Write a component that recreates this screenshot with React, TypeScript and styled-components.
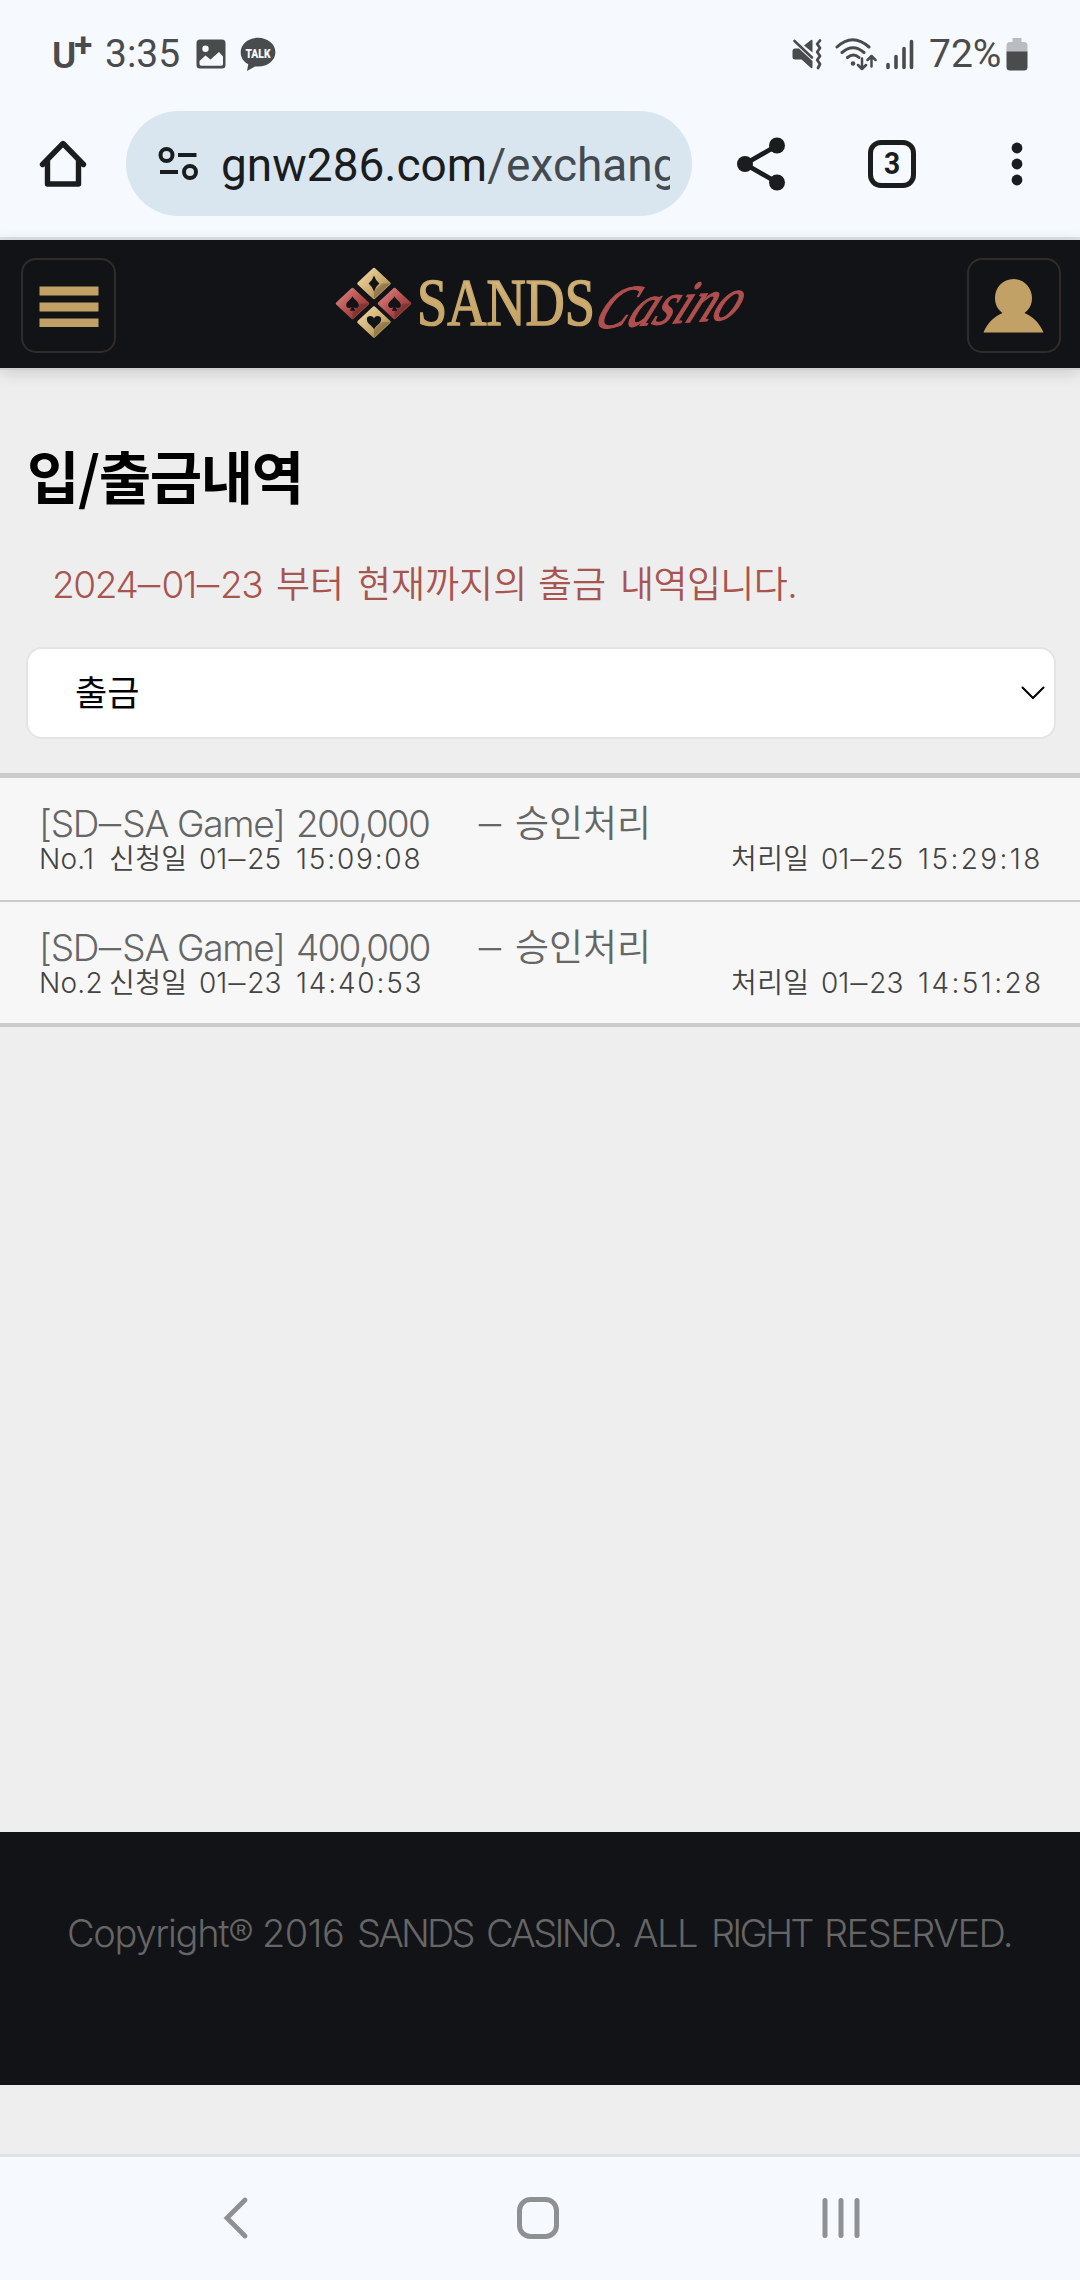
import React from "react";
import styled, { createGlobalStyle } from "styled-components";

const Global = createGlobalStyle`
  * { box-sizing: border-box; }
  html, body { margin: 0; padding: 0; background: #eeeeee; }
  svg { display: block; flex: none; }
`;

const SITE_FONT = `Inter, "Noto Sans CJK KR", sans-serif`;
const SYSTEM_FONT = `Roboto, "Noto Sans", sans-serif`;

const Screen = styled.div`
  width: 1080px;
  height: 2280px;
  overflow: hidden;
  display: flex;
  flex-direction: column;
  background: #eeeeee;
  font-family: ${SITE_FONT};
`;

/* ---------- device chrome ---------- */

const StatusBar = styled.header`
  height: 108px;
  flex: none;
  background: #f6f9fe;
  display: flex;
  justify-content: space-between;
  align-items: center;
  padding: 0 52px;
  font-family: ${SYSTEM_FONT};
  color: #4a4b4d;
`;

const StatusGroup = styled.div`
  display: flex;
  align-items: center;
`;

const Carrier = styled.span`
  width: 42px;
  display: flex;
  padding-top: 3px;
  font-size: 37px;
  line-height: 44px;
  font-weight: 600;
`;

const CarrierPlus = styled.span`
  font-size: 33px;
  line-height: 22px;
  font-weight: 700;
  margin-left: -2px;
`;

const StatusText = styled.span<{ $width: number; $left: number }>`
  width: ${(p) => p.$width}px;
  margin-left: ${(p) => p.$left}px;
  font-size: 39px;
  line-height: 44px;
  white-space: nowrap;
`;

const IconSlot = styled.span<{ $left: number }>`
  margin-left: ${(p) => p.$left}px;
  display: flex;
`;

const Toolbar = styled.nav`
  height: 132px;
  flex: none;
  background: #f6f9fe;
  border-bottom: 3px solid #dde2e7;
  display: flex;
  align-items: flex-start;
  padding: 3px 0 0 37px;
  font-family: ${SYSTEM_FONT};
`;

const ToolButton = styled.button<{ $left?: number }>`
  width: 52px;
  height: 105px;
  margin: 0 0 0 ${(p) => p.$left ?? 0}px;
  padding: 0;
  border: 0;
  background: none;
  display: flex;
  align-items: center;
  justify-content: center;
`;

const AddressBar = styled.div`
  width: 566px;
  height: 105px;
  margin-left: 37px;
  padding: 0 20px 0 31px;
  border-radius: 53px;
  background: #dae6ef;
  display: flex;
  align-items: center;
`;

const Url = styled.span`
  width: 449px;
  margin-left: 22px;
  padding-top: 2px;
  overflow: hidden;
  white-space: nowrap;
  font-size: 46px;
  line-height: 60px;
  color: #1b1c1e;
`;

const UrlPath = styled.span`
  color: #434b50;
`;

/* ---------- site header ---------- */

const SiteHeader = styled.header`
  height: 128px;
  flex: none;
  background: #121317;
  display: flex;
  align-items: flex-start;
  justify-content: space-between;
  padding: 18px 19px 0 21px;
  box-shadow: 0 2px 0 #d0d0d0, 0 4px 16px rgba(0, 0, 0, 0.16);
`;

const HeaderButton = styled.button<{ $w: number }>`
  width: ${(p) => p.$w}px;
  height: 95px;
  padding: 0;
  border: 2px solid #312c27;
  border-radius: 15px;
  background: #121317;
  display: flex;
  align-items: center;
  justify-content: center;
`;

/* ---------- page ---------- */

const Main = styled.main`
  height: 1464px;
  flex: none;
  padding-top: 68px;
`;

const Title = styled.h1`
  margin: 0 0 0 27px;
  height: 76px;
  font-family: "Noto Sans CJK KR", sans-serif;
  font-size: 57px;
  line-height: 76px;
  font-weight: 700;
  letter-spacing: -1.4px;
  color: #000;
`;

const Notice = styled.p`
  margin: 48px 0 0 52px;
  height: 50px;
  display: flex;
  font-size: 37px;
  line-height: 50px;
  font-weight: 350;
  color: #a8544f;
`;

const Word = styled.span<{ $w: number; $ls?: number }>`
  display: inline-block;
  flex: none;
  width: ${(p) => p.$w}px;
  letter-spacing: ${(p) => p.$ls ?? 0}px;
  white-space: nowrap;
`;

const WideHyphen = styled.span<{ $w: number }>`
  display: inline-block;
  width: ${(p) => p.$w}px;
  letter-spacing: 0;
  text-align: center;
  transform: scaleX(2);
`;

const Select = styled.div`
  width: 1030px;
  height: 92px;
  margin: 37px 0 0 26px;
  padding: 0 9px 0 47px;
  border: 2px solid #e4e4e4;
  border-radius: 16px;
  background: #fff;
  display: flex;
  align-items: center;
  justify-content: space-between;
  color: #000;
`;

const SelectValue = styled.span`
  padding-bottom: 5px;
  font-size: 35px;
`;

const History = styled.ul`
  list-style: none;
  margin: 34px 0 0;
  padding: 0;
  border-top: 5px solid #cbcbcb;
  border-bottom: 4px solid #cbcbcb;
  background: #f7f7f7;
`;

const Entry = styled.li`
  height: 124px;
  padding: 25px 0 0 39px;
  & + & {
    height: 121px;
  }
  &:first-child {
    border-bottom: 2px solid #cbcbcb;
  }
`;

const EntryHead = styled.div`
  height: 42px;
  display: flex;
  font-size: 37px;
  line-height: 42px;
  font-weight: 350;
  color: #666;
`;

const EntryMeta = styled.div`
  height: 29px;
  display: flex;
  font-size: 28px;
  line-height: 29px;
  font-weight: 350;
  color: #444;
`;

const Footer = styled.footer`
  height: 253px;
  flex: none;
  background: #121317;
  padding: 76px 0 0 67px;
  display: flex;
  font-size: 38px;
  line-height: 50px;
  font-weight: 300;
  color: #666;
`;

const NavBar = styled.nav`
  height: 126px;
  flex: none;
  margin-top: 69px;
  border-top: 3px solid #dde2e7;
  background: #f6f9fe;
  display: flex;
  padding: 38px 0 0 220px;
`;

const NavButton = styled.button<{ $left?: number }>`
  margin: 0 0 0 ${(p) => p.$left ?? 0}px;
  padding: 0;
  border: 0;
  height: 46px;
  background: none;
`;

/* ---------- drawings ---------- */

const PictureIcon = () => (
  <svg width="30" height="30" viewBox="0 0 30 30">
    <path fillRule="evenodd" fill="#4a4b4d" d="M4 0.5h22a3.5 3.5 0 0 1 3.5 3.5v22a3.5 3.5 0 0 1-3.5 3.5H4A3.5 3.5 0 0 1 .5 26V4A3.5 3.5 0 0 1 4 .5zM9.500 6.500a3.200 3.200 0 1 0 0 6.400a3.200 3.200 0 1 0 0-6.400zM3.500 22l6-5.500 5 4L23 13l4 4.500V25q0 1.800-1.800 1.800H5.300Q3.500 26.800 3.500 25z" />
  </svg>
);

const TalkIcon = () => (
  <svg width="36" height="35" viewBox="0 0 36 35">
    <path fill="#4a4b4d" d="M18 .8C8.300.8.700 7 .700 15.300c0 5.300 3 9.700 7.600 12L7 34l8-4.600q1.500.200 3 .200c9.700 0 17.400-6.200 17.400-14.300S27.700.8 18 .8z" />
    <text x="18" y="20.500" textAnchor="middle" textLength="25" lengthAdjust="spacingAndGlyphs" fontFamily="Roboto" fontWeight="900" fontSize="13.500" fill="#f6f9fe">TALK</text>
  </svg>
);

const MuteVibrateIcon = () => (
  <svg width="30" height="32" viewBox="0 0 30 32">
    <g fill="#4a4b4d">
      <path d="M3 10.500h4l13.500 12.500V29q0 2-1.500 1L9.500 21.500H3Q.5 21.500.5 19v-6q0-2.500 2.500-2.500z" />
      <path d="M12 7.500L19 2q1.500-1 1.500 1v11.500z" />
    </g>
    <path d="M2.500 3L20 19.500" stroke="#4a4b4d" strokeWidth="2.600" strokeLinecap="round" />
    <path d="M28 2.500L25.200 6l2.800 4-2.800 4 2.800 4-2.800 4 2.800 4-2 4" fill="none" stroke="#4a4b4d" strokeWidth="2.800" strokeLinecap="round" strokeLinejoin="round" />
  </svg>
);

const WifiIcon = () => (
  <svg width="42" height="34" viewBox="0 0 42 34">
    <g fill="none" stroke="#4a4b4d" strokeWidth="3" strokeLinecap="round" strokeLinejoin="round">
      <path d="M2 10Q17.500-4.500 34 10M7 15.500q11-9.500 22 0M12.500 20.500q6-5 11.500 0" />
      <path strokeWidth="2.500" d="M27 21.500v10M23 28l4 4 4-4M36.500 29.500v-10M32.500 23l4-4 4 4" />
    </g>
    <circle cx="18" cy="26.500" r="2.300" fill="#4a4b4d" />
  </svg>
);

const SignalIcon = () => (
  <svg width="30" height="32" viewBox="0 0 30 32">
    <path d="M3 26.500v3M11 18.500v11M19 10.500v19M26.500 3.500v26" stroke="#4a4b4d" strokeWidth="3.600" strokeLinecap="round" />
  </svg>
);

const BatteryIcon = () => (
  <svg width="22" height="34" viewBox="0 0 22 34">
    <path d="M6.500 1h9v4H18q3.500 0 3.500 3.500V15h-21V8.500Q.5 5 4 5h2.500z" fill="#b9bdc1" />
    <path d="M.5 14.500h21V30q0 3.500-3.500 3.500H4Q.5 33.500.5 30z" fill="#4a4b4d" />
  </svg>
);

const HomeIcon = () => (
  <svg width="50" height="50" viewBox="0 0 50 50">
    <path d="M4.500 25.500L25 4.500l20.500 21M9.500 22v23h31V22" fill="none" stroke="#1b1c1e" strokeWidth="5.400" strokeLinejoin="round" strokeLinecap="round" />
  </svg>
);

const SiteInfoIcon = () => (
  <svg width="42" height="36" viewBox="0 0 42 36">
    <g fill="none" stroke="#1b1c1e" strokeWidth="4">
      <circle cx="9.500" cy="9" r="6" />
      <circle cx="33" cy="26" r="6" />
      <path d="M21 9H39.500M3 26h18" />
    </g>
  </svg>
);

const ShareIcon = () => (
  <svg width="52" height="56" viewBox="0 0 52 56">
    <path d="M42 9.500L10 28l32 18.500" fill="none" stroke="#1b1c1e" strokeWidth="4.800" />
    <g fill="#1b1c1e">
      <circle cx="42" cy="9.500" r="8" />
      <circle cx="10" cy="28" r="8" />
      <circle cx="42" cy="46.500" r="8" />
    </g>
  </svg>
);

const TabCount = styled.span`
  width: 48px;
  height: 48px;
  border: 5px solid #1b1c1e;
  border-radius: 13px;
  font: 700 32px/37px Roboto, sans-serif;
  text-align: center;
  color: #1b1c1e;
`;

const Digit = styled.span`
  display: inline-block;
  transform: scaleX(0.88);
`;

const MoreIcon = () => (
  <svg width="12" height="48" viewBox="0 0 12 48" fill="#1b1c1e">
    <circle cx="6" cy="8" r="5.400" />
    <circle cx="6" cy="24" r="5.400" />
    <circle cx="6" cy="40" r="5.400" />
  </svg>
);

const MenuIcon = () => (
  <svg width="60" height="44" viewBox="0 0 60 44" fill="#c2a167">
    <path d="M.5 2.500h59v9H.5zM.5 18.500h59v9H.5zM.5 34.500h59v8.500H.5z" />
  </svg>
);

const UserIcon = () => (
  <svg width="62" height="56" viewBox="0 0 62 56">
    <path fill="#c2a167" d="M30.500 1c10.500 0 18.500 8.500 18.500 19 0 6-2.500 11.500-7.500 15 8.500 3.500 15 10 19 19.500H.5C4.500 45 11 38.500 19.500 35c-5-3.500-7.500-9-7.500-15C12 9.500 20 1 30.500 1z" />
  </svg>
);

const Gem = ({ x, y, fill, mark }: { x: number; y: number; fill: string; mark: string }) => (
  <g transform={`translate(${x} ${y})`}>
    <path d="M0-14.500L15.500 0 0 14.500-15.500 0z" fill={`url(#${fill})`} stroke={`url(#${fill})`} strokeWidth="2.500" strokeLinejoin="round" />
    <path d="M0 15L16 0H8L0 7z" fill="#000" opacity="0.200" />
    <path d={mark} fill="#121317" transform="scale(0.900)" />
  </g>
);

const SPADE = "M0-8C2-4 7-2 7 2c0 3-4 4-6 2l2 4h-6l2-4c-2 2-6 1-6-2 0-4 5-6 7-10z";
const HEART = "M0 8C-2 4-8 2-8-3c0-4 6-5 8-1 2-4 8-3 8 1 0 5-6 7-8 11z";
const DIAMOND = "M0-9Q2-3 6 0 2 3 0 9-2 3-6 0-2-3 0-9z";

const LogoSvg = styled.svg`
  overflow: visible;
`;

const Logo = () => (
  <LogoSvg width="420" height="90" viewBox="0 0 420 90">
    <defs>
      <linearGradient id="gold" x1="0" y1="0" x2="1" y2="1">
        <stop offset="0" stopColor="#f3dca4" />
        <stop offset="0.600" stopColor="#c9a96e" />
        <stop offset="1" stopColor="#8e723f" />
      </linearGradient>
      <linearGradient id="red" x1="0" y1="0" x2="1" y2="1">
        <stop offset="0" stopColor="#e08a86" />
        <stop offset="0.500" stopColor="#b5504f" />
        <stop offset="1" stopColor="#86332f" />
      </linearGradient>
      <linearGradient id="goldText" x1="0" y1="0" x2="0" y2="1">
        <stop offset="0" stopColor="#d8bd82" />
        <stop offset="1" stopColor="#c09b5a" />
      </linearGradient>
    </defs>
    <Gem x={42} y={25.5} fill="gold" mark={DIAMOND} />
    <Gem x={20.5} y={45.5} fill="red" mark={SPADE} />
    <Gem x={62.5} y={45.5} fill="red" mark={SPADE} />
    <Gem x={42} y={64} fill="gold" mark={HEART} />
    <text x="85" y="67" textLength="178" lengthAdjust="spacingAndGlyphs" fontFamily="Liberation Serif" fontSize="67" fill="url(#goldText)" stroke="#c5a76d" strokeWidth="1.600">SANDS</text>
    <g transform="translate(259 71) rotate(-4) skewX(-30)">
      <text x="0" y="0" textLength="144" lengthAdjust="spacingAndGlyphs" fontFamily="Liberation Serif" fontStyle="italic" fontSize="59" fill="#b04f4e" stroke="#b04f4e" strokeWidth="1.200">Casino</text>
    </g>
  </LogoSvg>
);

const ChevronDown = () => (
  <svg width="24" height="14" viewBox="0 0 24 14">
    <path d="M1.500 1.500L12 12 22.500 1.500" fill="none" stroke="#000" strokeWidth="2" strokeLinecap="round" />
  </svg>
);

/* ---------- data and rows ---------- */

const records = [
  { no: "1", amount: "200,000", asked: ["01", "25", "15:09:08"], done: ["01", "25", "15:29:18"] },
  { no: "2", amount: "400,000", asked: ["01", "23", "14:40:53"], done: ["01", "23", "14:51:28"] },
];

const ShortDate = ({ parts, spacing }: { parts: string[]; spacing: number }) => (
  <>
    <Word $w={97} $ls={0}>
      {parts[0]}
      <WideHyphen $w={20}>-</WideHyphen>
      {parts[1]}
    </Word>
    <Word $w={125} $ls={spacing}>{parts[2]}</Word>
  </>
);

export default function App() {
  return (
    <Screen>
      <Global />
      <StatusBar>
        <StatusGroup>
          <Carrier>U<CarrierPlus>+</CarrierPlus></Carrier>
          <StatusText $left={11} $width={78}>3:35</StatusText>
          <IconSlot $left={13}><PictureIcon /></IconSlot>
          <IconSlot $left={14}><TalkIcon /></IconSlot>
        </StatusGroup>
        <StatusGroup>
          <MuteVibrateIcon />
          <IconSlot $left={13}><WifiIcon /></IconSlot>
          <IconSlot $left={8}><SignalIcon /></IconSlot>
          <StatusText $left={14} $width={77}>72%</StatusText>
          <BatteryIcon />
        </StatusGroup>
      </StatusBar>

      <Toolbar>
        <ToolButton aria-label="Home"><HomeIcon /></ToolButton>
        <AddressBar>
          <SiteInfoIcon />
          <Url>gnw286.com<UrlPath>/exchange</UrlPath></Url>
        </AddressBar>
        <ToolButton $left={43} aria-label="Share"><ShareIcon /></ToolButton>
        <ToolButton $left={79} aria-label="Tabs"><TabCount><Digit>3</Digit></TabCount></ToolButton>
        <ToolButton $left={73} aria-label="More"><MoreIcon /></ToolButton>
      </Toolbar>

      <SiteHeader>
        <HeaderButton $w={95} aria-label="Menu"><MenuIcon /></HeaderButton>
        <Logo />
        <HeaderButton $w={94} aria-label="Account"><UserIcon /></HeaderButton>
      </SiteHeader>

      <Main>
        <Title>입/출금내역</Title>
        <Notice>
          <Word $w={224} $ls={-1.4}>
            2024<WideHyphen $w={24}>-</WideHyphen>01<WideHyphen $w={24}>-</WideHyphen>23
          </Word>
          <Word $w={81}>부터</Word>
          <Word $w={181}>현재까지의</Word>
          <Word $w={82}>출금</Word>
          <Word $w={180} $ls={-0.6}>내역입니다.</Word>
        </Notice>
        <Select>
          <SelectValue>출금</SelectValue>
          <ChevronDown />
        </Select>
        <History>
          {records.map((r) => (
            <Entry key={r.no}>
              <EntryHead>
                <Word $w={138} $ls={-1.2}>
                  [SD<WideHyphen $w={24}>-</WideHyphen>SA
                </Word>
                <Word $w={119} $ls={-1.3}>Game]</Word>
                <Word $w={182} $ls={-1.8}>{r.amount}</Word>
                <Word $w={37}><WideHyphen $w={24}>-</WideHyphen></Word>
                <Word $w={140}>승인처리</Word>
              </EntryHead>
              <EntryMeta>
                <Word $w={70} $ls={0.2}>No.{r.no}</Word>
                <Word $w={90} $ls={0.4}>신청일</Word>
                <ShortDate parts={r.asked} spacing={1.8} />
                <Word $w={310} />
                <Word $w={90} $ls={0.4}>처리일</Word>
                <ShortDate parts={r.done} spacing={2.4} />
              </EntryMeta>
            </Entry>
          ))}
        </History>
      </Main>

      <Footer>
        <Word $w={195} $ls={-1.3}>Copyright®</Word>
        <Word $w={95} $ls={-0.6}>2016</Word>
        <Word $w={129} $ls={-2.8}>SANDS</Word>
        <Word $w={147} $ls={-2.7}>CASINO.</Word>
        <Word $w={78} $ls={-1.5}>ALL</Word>
        <Word $w={113} $ls={-2.8}>RIGHT</Word>
        <Word $w={190} $ls={-1.5}>RESERVED.</Word>
      </Footer>

      <NavBar>
        <NavButton aria-label="Back">
          <svg width="32" height="46" viewBox="0 0 32 46">
            <path d="M25 5L7 23l18 18" fill="none" stroke="#8f9092" strokeWidth="4.800" strokeLinecap="round" />
          </svg>
        </NavButton>
        <NavButton $left={263} aria-label="Home">
          <svg width="46" height="46" viewBox="0 0 46 46">
            <rect x="4.500" y="4.500" width="37" height="37" rx="11" fill="none" stroke="#8f9092" strokeWidth="5" />
          </svg>
        </NavButton>
        <NavButton $left={257} aria-label="Recents">
          <svg width="46" height="46" viewBox="0 0 46 46">
            <path d="M7 5.500v35M23 5.500v35M39 5.500v35" stroke="#8f9092" strokeWidth="5" strokeLinecap="round" />
          </svg>
        </NavButton>
      </NavBar>
    </Screen>
  );
}
